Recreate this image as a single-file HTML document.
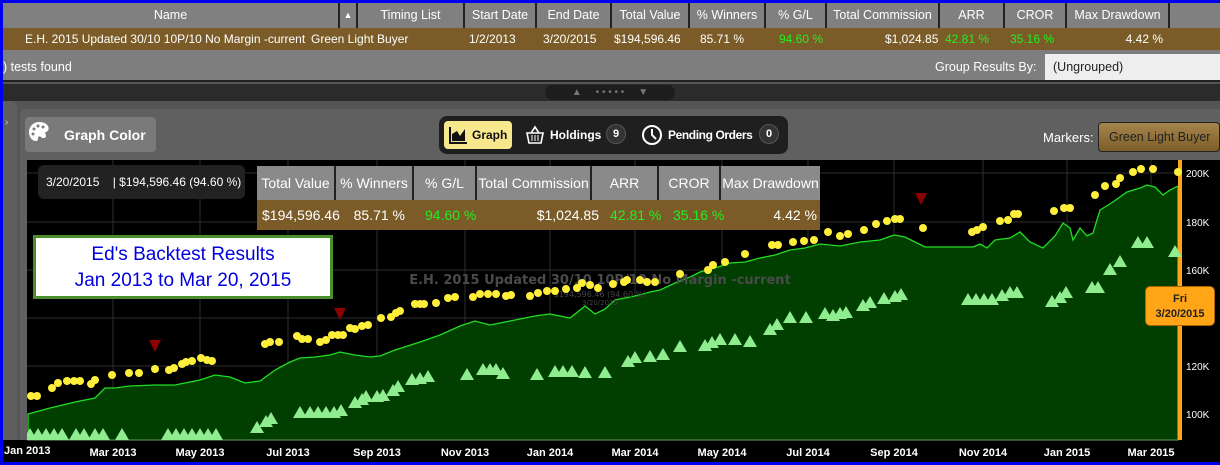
<!DOCTYPE html>
<html><head><meta charset="utf-8"><style>
*{margin:0;padding:0;box-sizing:border-box}
body{width:1220px;height:465px;overflow:hidden;background:#0000f0;font-family:"Liberation Sans",sans-serif;position:relative}
.a{position:absolute;white-space:nowrap}
.hd{top:3px;height:25px;background:#808080;color:#fff;font-size:12.5px;line-height:25px;text-align:center;border-right:2px solid #222}
.rw{top:28px;height:22px;background:#7b5c28;color:#fff;font-size:12.5px;line-height:22px}
.g{color:#22ee22}
.sh{top:0;height:34px;background:#8a8a8a;color:#fff;font-size:14px;line-height:34px;text-align:center;border-right:2px solid #222}
</style></head><body>
<div class="a" style="left:3px;top:3px;width:1217px;height:459px;background:#555"></div>
<!-- header -->
<div class="a hd" style="left:3px;width:337px">Name</div>
<div class="a hd" style="left:340px;width:18px;font-size:9px">▲</div>
<div class="a hd" style="left:358px;width:107px">Timing List</div>
<div class="a hd" style="left:465px;width:72px">Start Date</div>
<div class="a hd" style="left:537px;width:75px">End Date</div>
<div class="a hd" style="left:612px;width:78px">Total Value</div>
<div class="a hd" style="left:690px;width:76px">% Winners</div>
<div class="a hd" style="left:766px;width:61px">% G/L</div>
<div class="a hd" style="left:827px;width:113px">Total Commission</div>
<div class="a hd" style="left:940px;width:65px">ARR</div>
<div class="a hd" style="left:1005px;width:62px">CROR</div>
<div class="a hd" style="left:1067px;width:103px">Max Drawdown</div>
<div class="a hd" style="left:1170px;width:50px;border:none"></div>
<div class="a rw" style="left:3px;width:1217px"></div>
<div class="a rw" style="left:25px;background:none;font-size:12px">E.H. 2015 Updated 30/10 10P/10 No Margin -current</div>
<div class="a rw" style="left:311px;background:none;font-size:12px">Green Light Buyer</div>
<div class="a rw" style="left:469px;background:none;font-size:12px">1/2/2013</div>
<div class="a rw" style="left:543px;background:none;font-size:12px">3/20/2015</div>
<div class="a rw" style="left:614px;background:none;font-size:12px">$194,596.46</div>
<div class="a rw" style="left:700px;background:none;font-size:12px">85.71 %</div>
<div class="a rw g" style="left:779px;background:none;font-size:12px">94.60 %</div>
<div class="a rw" style="left:885px;background:none;font-size:12px">$1,024.85</div>
<div class="a rw g" style="left:945px;background:none;font-size:12px">42.81 %</div>
<div class="a rw g" style="left:1010px;background:none;font-size:12px">35.16 %</div>
<div class="a rw" style="left:1053px;width:110px;text-align:right;background:none;font-size:12px">4.42 %</div>
<div class="a" style="left:3px;top:50px;width:1217px;height:32px;background:#7e7e7e;border-bottom:2px solid #222"></div>
<div class="a" style="left:3px;top:60px;color:#fff;font-size:12.5px">) tests found</div>
<div class="a" style="left:935px;top:60px;color:#fff;font-size:12.5px">Group Results By:</div>
<div class="a" style="left:1045px;top:54px;width:175px;height:26px;background:#eee"></div>
<div class="a" style="left:1053px;top:54px;height:26px;line-height:26px;color:#222;font-size:12.5px">(Ungrouped)</div>
<div class="a" style="left:3px;top:84px;width:1217px;height:17px;background:#2b2b2b"></div>
<div class="a" style="left:545px;top:85px;width:130px;height:15px;background:#1d1d1d;border-radius:8px;color:#777;font-size:10px;line-height:15px;text-align:center">▲ &nbsp; &nbsp; • • • • • &nbsp; &nbsp; ▼</div>
<!-- panel -->
<div class="a" style="left:3px;top:101px;width:14px;height:361px;background:#5e5e5e;border-radius:0 6px 0 0"></div>
<div class="a" style="left:5px;top:117px;color:#ccc;font-size:10px">›</div>
<div class="a" style="left:20px;top:109px;width:1200px;height:353px;background:#606060;border-radius:6px 0 0 0"></div>
<div class="a" style="left:25px;top:117px;width:131px;height:35px;background:#7a7a7a;border-radius:4px"></div>
<svg class="a" style="left:28px;top:121px" width="22" height="24" viewBox="0 0 22 24"><path d="M11 1C5 1 1 6 1 11c0 5 3 9 7 9 2 0 2-2 2-3 0-2 2-2 3-1 2 2 5 1 5-1 0-2-2-3 0-4 3-1 3-4 2-6-2-3-5-4-9-4z" fill="#fff"/><circle cx="6" cy="8" r="1.5" fill="#7a7a7a"/><circle cx="10" cy="5" r="1.5" fill="#7a7a7a"/><circle cx="15" cy="6" r="1.5" fill="#7a7a7a"/><circle cx="5" cy="13" r="1.5" fill="#7a7a7a"/></svg>
<div class="a" style="left:64px;top:127px;color:#fff;font-size:14px;font-weight:bold">Graph Color</div>
<div class="a" style="left:439px;top:116px;width:349px;height:38px;background:#1f1f1f;border-radius:8px"></div>
<div class="a" style="left:444px;top:121px;width:68px;height:28px;background:#f7e88e;border-radius:4px"></div>
<svg class="a" style="left:448px;top:125px" width="20" height="20"><path d="M2 2V18H19" stroke="#111" stroke-width="2" fill="none"/><path d="M4 16L4 9L9 6L12 11L17 4V16Z" fill="#111"/></svg>
<div class="a" style="left:472px;top:128px;color:#111;font-size:12px;font-weight:bold">Graph</div>
<svg class="a" style="left:525px;top:125px" width="20" height="20"><path d="M2 8H18L16 18H4Z M6 8L10 2L14 8" stroke="#fff" stroke-width="1.6" fill="none"/><path d="M7 10V16M10 10V16M13 10V16" stroke="#fff"/></svg>
<div class="a" style="left:550px;top:128px;color:#fff;font-size:12px;font-weight:bold">Holdings</div>
<div class="a" style="left:606px;top:124px;width:20px;height:20px;border-radius:10px;background:#333;border:1px solid #555;color:#fff;font-size:11px;font-weight:bold;text-align:center;line-height:18px">9</div>
<svg class="a" style="left:641px;top:124px" width="22" height="22"><circle cx="11" cy="11" r="9" stroke="#fff" stroke-width="2" fill="none"/><path d="M11 5V11L15 15" stroke="#fff" stroke-width="2" fill="none"/></svg>
<div class="a" style="left:668px;top:128px;color:#fff;font-size:12px;font-weight:bold;letter-spacing:-0.4px">Pending Orders</div>
<div class="a" style="left:759px;top:124px;width:20px;height:20px;border-radius:10px;background:#333;border:1px solid #555;color:#fff;font-size:11px;font-weight:bold;text-align:center;line-height:18px">0</div>
<div class="a" style="left:1043px;top:130px;color:#fff;font-size:13px">Markers:</div>
<div class="a" style="left:1098px;top:122px;width:122px;height:30px;background:linear-gradient(#a5854a,#7d5e2a);border:1px solid #222;border-radius:4px;color:#222;font-size:12.5px;line-height:28px;padding-left:10px">Green Light Buyer</div>
<!-- chart -->
<div class="a" style="left:3px;top:440px;width:24px;height:22px;background:#000"></div>
<svg class="a" style="left:27px;top:160px" width="1193" height="302" viewBox="27 160 1193 302">
<rect x="27" y="160" width="1193" height="302" fill="#000"/>
<g stroke="#2e2e2e" stroke-width="1">
<path d="M27 173H1178M27 222H1178M27 270H1178M27 318H1178M27 366H1178M27 414H1178"/>
<path d="M113 160V440M200 160V440M288 160V440M377 160V440M465 160V440M550 160V440M635 160V440M722 160V440M808 160V440M894 160V440M983 160V440M1067 160V440M1151 160V440"/>
</g>
<path d="M28 414L50 408L75 402L95 398L105 388L115 388L130 386L155 385L175 385L200 380L215 375L230 377L245 383L260 381L275 370L290 362L300 358L315 357L330 355L340 352L355 355L370 357L380 356L395 350L420 342L440 335L460 326L475 321L490 325L510 321L535 316L550 314L570 318L585 306L595 314L605 309L615 300L635 296L650 292L660 290L675 283L690 277L700 272L715 268L730 263L745 262L760 258L775 255L790 250L805 248L820 244L840 246L860 242L880 240L894 235L905 237L917 243L925 247L973 247L980 244L987 248L995 240L1010 238L1020 232L1030 242L1043 248L1055 236L1063 223L1070 228L1073 240L1080 228L1087 236L1093 233L1100 210L1113 202L1127 192L1140 188L1147 185L1155 187L1163 195L1170 190L1178 186V440H28Z" fill="#003f00" stroke="#22dd22" stroke-width="1.3"/>
<path d="M27 440H1178" stroke="#666"/>
<rect x="1178" y="160" width="4" height="280" fill="#ffa41a"/>
<g fill="#fff" font-size="10" font-family="Liberation Sans,sans-serif">
<text x="1186" y="177">200K</text><text x="1186" y="226">180K</text><text x="1186" y="274">160K</text><text x="1186" y="370">120K</text><text x="1186" y="418">100K</text>
</g>
<g fill="#fff" font-size="11" font-weight="bold" font-family="Liberation Sans,sans-serif" text-anchor="middle">
<text x="113" y="456">Mar 2013</text><text x="200" y="456">May 2013</text><text x="288" y="456">Jul 2013</text><text x="377" y="456">Sep 2013</text><text x="465" y="456">Nov 2013</text><text x="550" y="456">Jan 2014</text><text x="635" y="456">Mar 2014</text><text x="722" y="456">May 2014</text><text x="808" y="456">Jul 2014</text><text x="894" y="456">Sep 2014</text><text x="983" y="456">Nov 2014</text><text x="1067" y="456">Jan 2015</text><text x="1151" y="456">Mar 2015</text>
</g>
<text x="600" y="284" fill="#4a4a4a" font-size="13" font-weight="bold" font-family="DejaVu Sans,sans-serif" text-anchor="middle">E.H. 2015 Updated 30/10 10P/10 No Margin -current</text>
<text x="600" y="297" fill="#444" font-size="8" font-family="DejaVu Sans,sans-serif" text-anchor="middle">$194,596.46 (94.60 %)</text>
<text x="600" y="305" fill="#444" font-size="7" font-family="DejaVu Sans,sans-serif" text-anchor="middle">3/20/2015</text>
<defs><path id="t" d="M0 -7L7 5H-7Z" fill="#8fec8f"/></defs>
<g>
<use href="#t" x="30" y="435"/><use href="#t" x="38" y="435"/><use href="#t" x="46" y="435"/><use href="#t" x="54" y="435"/><use href="#t" x="62" y="435"/><use href="#t" x="76" y="435"/><use href="#t" x="84" y="435"/><use href="#t" x="95" y="435"/><use href="#t" x="103" y="435"/><use href="#t" x="122" y="435"/><use href="#t" x="168" y="435"/><use href="#t" x="176" y="435"/><use href="#t" x="184" y="435"/><use href="#t" x="192" y="435"/><use href="#t" x="200" y="435"/><use href="#t" x="208" y="435"/><use href="#t" x="216" y="435"/><use href="#t" x="257" y="428"/><use href="#t" x="266" y="422"/><use href="#t" x="271" y="419"/>
<use href="#t" x="300" y="413"/><use href="#t" x="310" y="413"/><use href="#t" x="318" y="413"/><use href="#t" x="326" y="413"/><use href="#t" x="334" y="413"/><use href="#t" x="341" y="411"/><use href="#t" x="355" y="403"/><use href="#t" x="362" y="400"/><use href="#t" x="366" y="397"/><use href="#t" x="377" y="397"/><use href="#t" x="383" y="396"/><use href="#t" x="393" y="391"/><use href="#t" x="398" y="387"/><use href="#t" x="412" y="380"/><use href="#t" x="420" y="379"/><use href="#t" x="428" y="377"/><use href="#t" x="467" y="375"/><use href="#t" x="483" y="370"/><use href="#t" x="490" y="370"/><use href="#t" x="496" y="370"/><use href="#t" x="503" y="374"/>
<use href="#t" x="537" y="375"/><use href="#t" x="555" y="372"/><use href="#t" x="563" y="372"/><use href="#t" x="572" y="372"/><use href="#t" x="585" y="373"/><use href="#t" x="605" y="373"/><use href="#t" x="628" y="362"/><use href="#t" x="635" y="358"/><use href="#t" x="650" y="357"/><use href="#t" x="663" y="355"/><use href="#t" x="680" y="347"/><use href="#t" x="705" y="346"/><use href="#t" x="712" y="343"/><use href="#t" x="720" y="340"/><use href="#t" x="735" y="340"/><use href="#t" x="750" y="342"/><use href="#t" x="770" y="330"/><use href="#t" x="777" y="325"/><use href="#t" x="790" y="318"/><use href="#t" x="806" y="318"/><use href="#t" x="825" y="314"/><use href="#t" x="833" y="316"/><use href="#t" x="840" y="314"/><use href="#t" x="846" y="313"/><use href="#t" x="863" y="306"/><use href="#t" x="870" y="303"/><use href="#t" x="884" y="299"/><use href="#t" x="895" y="297"/><use href="#t" x="901" y="295"/>
<use href="#t" x="968" y="300"/><use href="#t" x="976" y="300"/><use href="#t" x="984" y="300"/><use href="#t" x="992" y="300"/><use href="#t" x="1002" y="296"/><use href="#t" x="1010" y="293"/><use href="#t" x="1017" y="293"/><use href="#t" x="1052" y="302"/><use href="#t" x="1060" y="298"/><use href="#t" x="1066" y="293"/><use href="#t" x="1092" y="288"/><use href="#t" x="1098" y="288"/><use href="#t" x="1110" y="270"/><use href="#t" x="1120" y="262"/><use href="#t" x="1138" y="243"/><use href="#t" x="1147" y="243"/><use href="#t" x="1175" y="252"/>
</g>
<g fill="#ffee3a">
<circle cx="31" cy="396" r="4"/><circle cx="37" cy="396" r="4"/><circle cx="52" cy="388" r="4"/><circle cx="58" cy="383" r="4"/><circle cx="67" cy="381" r="4"/><circle cx="74" cy="381" r="4"/><circle cx="80" cy="381" r="4"/><circle cx="91" cy="384" r="4"/><circle cx="95" cy="380" r="4"/><circle cx="112" cy="375" r="4"/><circle cx="129" cy="373" r="4"/><circle cx="139" cy="373" r="4"/><circle cx="155" cy="369" r="4"/><circle cx="169" cy="370" r="4"/><circle cx="174" cy="368" r="4"/><circle cx="182" cy="364" r="4"/><circle cx="186" cy="362" r="4"/><circle cx="192" cy="361" r="4"/><circle cx="201" cy="358" r="4"/><circle cx="207" cy="360" r="4"/><circle cx="212" cy="361" r="4"/>
<circle cx="265" cy="344" r="4"/><circle cx="270" cy="342" r="4"/><circle cx="279" cy="342" r="4"/><circle cx="297" cy="336" r="4"/><circle cx="302" cy="339" r="4"/><circle cx="308" cy="339" r="4"/><circle cx="320" cy="342" r="4"/><circle cx="326" cy="340" r="4"/><circle cx="332" cy="335" r="4"/><circle cx="338" cy="335" r="4"/><circle cx="343" cy="335" r="4"/><circle cx="350" cy="328" r="4"/><circle cx="355" cy="329" r="4"/><circle cx="362" cy="326" r="4"/><circle cx="368" cy="325" r="4"/><circle cx="381" cy="318" r="4"/><circle cx="391" cy="317" r="4"/><circle cx="396" cy="313" r="4"/><circle cx="400" cy="311" r="4"/><circle cx="415" cy="304" r="4"/><circle cx="420" cy="304" r="4"/><circle cx="424" cy="304" r="4"/><circle cx="436" cy="303" r="4"/>
<circle cx="448" cy="298" r="4"/><circle cx="455" cy="297" r="4"/><circle cx="473" cy="297" r="4"/><circle cx="480" cy="294" r="4"/><circle cx="488" cy="294" r="4"/><circle cx="496" cy="294" r="4"/><circle cx="506" cy="296" r="4"/><circle cx="511" cy="295" r="4"/><circle cx="530" cy="296" r="4"/><circle cx="538" cy="293" r="4"/><circle cx="547" cy="291" r="4"/><circle cx="555" cy="291" r="4"/><circle cx="566" cy="289" r="4"/><circle cx="577" cy="288" r="4"/><circle cx="582" cy="283" r="4"/><circle cx="590" cy="285" r="4"/><circle cx="598" cy="288" r="4"/><circle cx="613" cy="284" r="4"/><circle cx="624" cy="282" r="4"/><circle cx="627" cy="280" r="4"/><circle cx="640" cy="280" r="4"/><circle cx="647" cy="282" r="4"/><circle cx="655" cy="282" r="4"/><circle cx="680" cy="274" r="4"/><circle cx="708" cy="270" r="4"/><circle cx="713" cy="265" r="4"/><circle cx="725" cy="262" r="4"/><circle cx="745" cy="254" r="4"/><circle cx="772" cy="245" r="4"/><circle cx="778" cy="245" r="4"/><circle cx="793" cy="242" r="4"/><circle cx="804" cy="241" r="4"/><circle cx="814" cy="240" r="4"/><circle cx="828" cy="232" r="4"/><circle cx="840" cy="236" r="4"/><circle cx="848" cy="234" r="4"/><circle cx="864" cy="230" r="4"/><circle cx="876" cy="224" r="4"/><circle cx="887" cy="221" r="4"/><circle cx="895" cy="219" r="4"/><circle cx="900" cy="219" r="4"/><circle cx="923" cy="228" r="4"/>
<circle cx="972" cy="232" r="4"/><circle cx="977" cy="230" r="4"/><circle cx="983" cy="227" r="4"/><circle cx="1000" cy="221" r="4"/><circle cx="1008" cy="220" r="4"/><circle cx="1014" cy="214" r="4"/><circle cx="1018" cy="214" r="4"/><circle cx="1054" cy="211" r="4"/><circle cx="1064" cy="208" r="4"/><circle cx="1070" cy="208" r="4"/><circle cx="1095" cy="195" r="4"/><circle cx="1105" cy="186" r="4"/><circle cx="1116" cy="184" r="4"/><circle cx="1120" cy="178" r="4"/><circle cx="1133" cy="172" r="4"/><circle cx="1141" cy="169" r="4"/><circle cx="1153" cy="169" r="4"/><circle cx="1178" cy="172" r="4"/>
</g>
<g fill="#8b0000"><path d="M149 340H161L155 352Z"/><path d="M334 308H346L340 320Z"/><path d="M915 193H927L921 205Z"/></g>
</svg>
<div class="a" style="left:4px;top:445px;color:#fff;font-size:11px;font-weight:bold">Jan 2013</div>
<!-- overlays -->
<div class="a" style="left:38px;top:165px;width:207px;height:34px;background:#222;border-radius:6px;color:#fff;font-size:12px;line-height:34px;padding-left:8px">3/20/2015 &nbsp; &nbsp;| $194,596.46 (94.60 %)</div>
<div class="a" style="left:257px;top:166px;width:563px;height:64px">
<div class="a sh" style="left:0;width:79px">Total Value</div>
<div class="a sh" style="left:79px;width:78px">% Winners</div>
<div class="a sh" style="left:157px;width:63px">% G/L</div>
<div class="a sh" style="left:220px;width:115px">Total Commission</div>
<div class="a sh" style="left:335px;width:67px">ARR</div>
<div class="a sh" style="left:402px;width:62px">CROR</div>
<div class="a sh" style="left:464px;width:99px;border:none">Max Drawdown</div>
<div class="a" style="left:0;top:34px;width:563px;height:30px;background:#7b5b28;color:#fff;font-size:14px;line-height:30px">
<span class="a" style="left:5px">$194,596.46</span><span class="a" style="left:73px;width:75px;text-align:right">85.71 %</span><span class="a g" style="left:168px">94.60 %</span><span class="a" style="left:230px;width:112px;text-align:right">$1,024.85</span><span class="a g" style="left:353px">42.81 %</span><span class="a g" style="left:416px">35.16 %</span><span class="a" style="left:470px;width:90px;text-align:right">4.42 %</span>
</div></div>
<div class="a" style="left:33px;top:235px;width:300px;height:64px;background:#fff;border:3px solid #4a8f2a;color:#0000dd;font-size:19px;text-align:center;line-height:26px;padding-top:4px">Ed's Backtest Results<br>Jan 2013 to Mar 20, 2015</div>
<div class="a" style="left:1145px;top:286px;width:70px;height:40px;background:#ffa516;border:1px solid #a86400;border-radius:5px;color:#222;font-size:11px;font-weight:bold;text-align:center;line-height:15px;padding-top:5px">Fri<br>3/20/2015</div>
</body></html>
